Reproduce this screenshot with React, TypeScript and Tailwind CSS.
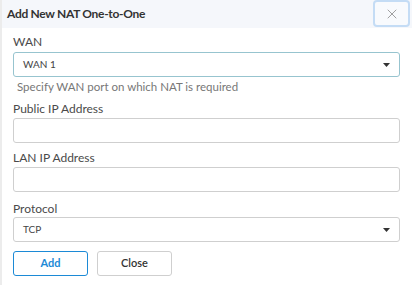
import { X } from 'lucide-react';

function Caret() {
  return (
    <svg width="7" height="4" viewBox="0 0 7 4" className="text-[#333]">
      <path d="M0 0h7L3.5 4z" fill="currentColor" />
    </svg>
  );
}

function SelectBox({ value, focused }: { value: string; focused?: boolean }) {
  return (
    <div
      className={`h-[25px] flex items-center justify-between pl-[9px] pr-[9px] rounded-[3px] border bg-white ${
        focused ? 'border-[#97c4cf]' : 'border-[#cfcfcf]'
      }`}
    >
      <span className="text-[10px] text-[#444]">{value}</span>
      <Caret />
    </div>
  );
}

function TextBox() {
  return <div className="h-[25px] rounded-[3px] border border-[#cfcfcf] bg-white" />;
}

export default function App() {
  return (
    <div className="w-[412px] h-[285px] bg-white border-l-2 border-[#ececec] font-['Lato',sans-serif] overflow-hidden">
      {/* Header */}
      <div className="h-[28px] bg-[#f5f7fb] flex items-center justify-between pl-[5px] pr-[2px]">
        <h1 className="text-[12px] tracking-[-0.3px] font-bold text-[#333]">Add New NAT One-to-One</h1>
        <button className="w-[37px] h-[27px] -mt-[1px] flex items-center justify-center rounded-[4px] border-2 border-[#c4dcf5] bg-[#f8fafd]">
          <X size={16} strokeWidth={1.2} className="text-[#888]" />
        </button>
      </div>

      {/* Form */}
      <div className="pl-[11px] pr-[12px] pt-[7px]">
        <label className="block text-[12px] leading-[14px] text-[#4a4a4a]">WAN</label>
        <div className="mt-[3px]">
          <SelectBox value="WAN 1" focused />
        </div>
        <p className="mt-[3px] pl-[4px] text-[11.5px] leading-[14px] text-[#777]">
          Specify WAN port on which NAT is required
        </p>

        <label className="block mt-[8px] text-[12px] leading-[14px] text-[#4a4a4a]">Public IP Address</label>
        <div className="mt-[2px]">
          <TextBox />
        </div>

        <label className="block mt-[8px] text-[12px] leading-[14px] text-[#4a4a4a]">LAN IP Address</label>
        <div className="mt-[2px]">
          <TextBox />
        </div>

        <label className="block mt-[10px] text-[12px] leading-[14px] text-[#4a4a4a]">Protocol</label>
        <div className="mt-[1px]">
          <SelectBox value="TCP" />
        </div>

        <div className="flex gap-[9px] mt-[9px]">
          <button className="w-[75px] h-[25px] rounded-[3px] border border-[#1c8ad6] text-[11px] font-bold text-[#1c8ad6]">
            Add
          </button>
          <button className="w-[75px] h-[25px] rounded-[3px] border border-[#cfcfcf] text-[11px] font-semibold text-[#333]">
            Close
          </button>
        </div>
      </div>
    </div>
  );
}
